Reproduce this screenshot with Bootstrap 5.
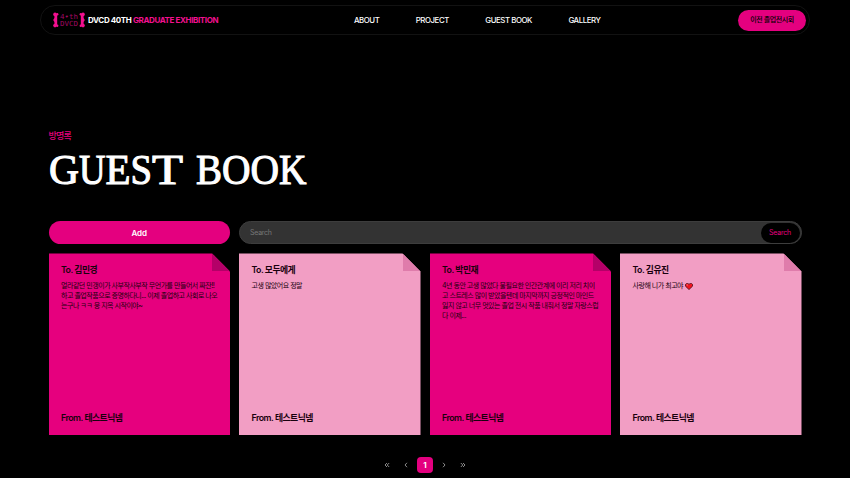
<!DOCTYPE html>
<html lang="ko">
<head>
<meta charset="utf-8">
<meta name="viewport" content="width=device-width, initial-scale=1">
<title>Guest Book</title>
<link href="https://cdn.jsdelivr.net/npm/bootstrap@5.3.0/dist/css/bootstrap.min.css" rel="stylesheet">
<style>
body{background:#000;color:#fff;font-family:Inter,"Noto Sans CJK KR",sans-serif;height:478px;overflow:hidden}
.top-bar{margin:5px 40px 0;width:770px;height:30px;border:1px solid #121212;border-radius:15px;padding:0 3px 0 12px}
.brand-text{font-size:8px;font-weight:700;letter-spacing:-.38px;line-height:12px;margin-left:3px;width:266px;white-space:nowrap}
.pink{color:#f2108f}
.menu{gap:36.4px}
.menu a{font-size:7.8px;font-weight:500;letter-spacing:-.42px;line-height:12px;color:#fff;padding:0;white-space:nowrap}
.prev-btn{width:68px;height:21px;border-radius:11px;background:#e4007f;color:#000;font-size:7px;font-weight:500;letter-spacing:-.45px;padding:0;border:0}
.page-area{width:753px;margin:94px 0 0 48.5px}
.sub{font-size:9px;font-weight:500;line-height:13px;color:#e4007f;letter-spacing:-.8px}
.headline{height:54px;margin:3px 0 0;line-height:0}
.headline text{font-family:"Liberation Serif",serif;font-size:42.5px;font-weight:400;fill:#fff;stroke:#fff;stroke-width:1.1px}
.tools{display:grid;grid-template-columns:181.5px minmax(0,1fr);gap:9px;margin-top:22.4px}
.add-btn{height:23px;border-radius:12px;background:#e4007f;color:#fff;font-size:8px;font-weight:600;line-height:22px;padding:0;border:0}
.search-box{height:23px;border-radius:12px;background:#333;border:1px solid #3d3d3d;padding:0 1px 0 10px}
.search-box input{background:none;border:0;padding:1.5px 0 0;font-size:7px;letter-spacing:-.25px;color:#888}
.search-box input::placeholder{color:#777;opacity:1}
.search-btn{width:39px;height:19.5px;border-radius:10px;background:#000;color:#e4007f;font-size:7px;letter-spacing:-.2px;padding:1px 0 0;border:0;flex:none}
.notes{display:grid;grid-template-columns:repeat(4,minmax(0,1fr));gap:9px;margin-top:9px}
.note{height:181.5px;position:relative;padding:10px 12px 10.5px 12.5px;color:#18000d;clip-path:polygon(0 0,calc(100% - 18px) 0,100% 18px,100% 100%,0 100%)}
.note::after{content:"";position:absolute;right:0;top:0;width:18px;height:18px;background:#b40068}
.hot{background:#e6007e}
.soft{background:#f29ec4}
.soft::after{background:#df7cab}
.note h2{font-size:8.8px;font-weight:600;line-height:13px;letter-spacing:-.5px;margin:0}
.note p{font-size:7px;line-height:10px;letter-spacing:-.49px;margin:5px 0 0;white-space:nowrap}
.pager{gap:3px;margin-top:22px;height:16px}
.pager a{width:16px;height:16px;display:flex;align-items:center;justify-content:center;color:#888}
.pager a.on{background:#e4007f;border-radius:4px;color:#fff;font-size:8px;font-weight:700;text-decoration:none}
</style>
</head>
<body>
<nav class="top-bar d-flex align-items-center">
  <svg width="32" height="16" viewBox="0 0 32 16">
    <g fill="#f2108f"><circle cx="2" cy="2.4" r="1.8"/><circle cx="4.2" cy="2.2" r="1.2"/><circle cx="2" cy="13.6" r="1.8"/><circle cx="4.2" cy="13.8" r="1.2"/><path d="M1.400 2h2.800v12H1.400v-4L.2 8l1.200-2z"/>
    <circle cx="30" cy="2.4" r="1.8"/><circle cx="27.800" cy="2.200" r="1.200"/><circle cx="30" cy="13.600" r="1.800"/><circle cx="27.800" cy="13.800" r="1.200"/><path d="M30.600 2h-2.800v12h2.800v-4l1.200-2-1.200-2z"/></g>
    <g fill="#a10860" font-family="DejaVu Sans Mono,monospace" font-size="7"><text x="7" y="7.200" textLength="18" lengthAdjust="spacingAndGlyphs">4•th</text><text x="7" y="13.700" textLength="18" lengthAdjust="spacingAndGlyphs">DVCD</text></g>
  </svg>
  <span class="brand-text">DVCD 40TH <span class="pink">GRADUATE EXHIBITION</span></span>
  <div class="menu d-flex">
    <a class="nav-link" href="#">ABOUT</a><a class="nav-link" href="#">PROJECT</a><a class="nav-link" href="#">GUEST BOOK</a><a class="nav-link" href="#">GALLERY</a>
  </div>
  <button class="btn prev-btn ms-auto">이전 졸업전시회</button>
</nav>
<main class="page-area">
  <div class="sub">방명록</div>
  <h1 class="headline"><svg width="262" height="54" role="img" aria-label="GUEST BOOK">
    <g transform="translate(.5 38.500)">
    <text x="-.5" textLength="30" lengthAdjust="spacingAndGlyphs">G</text><text x="29.500" textLength="26.500" lengthAdjust="spacingAndGlyphs">U</text><text x="56" textLength="25" lengthAdjust="spacingAndGlyphs">E</text><text x="81" textLength="21.500" lengthAdjust="spacingAndGlyphs">S</text><text x="102.500" textLength="31" lengthAdjust="spacingAndGlyphs">T</text>
    <text x="146.500" textLength="26" lengthAdjust="spacingAndGlyphs">B</text><text x="172.500" textLength="28.500" lengthAdjust="spacingAndGlyphs">O</text><text x="201" textLength="28.500" lengthAdjust="spacingAndGlyphs">O</text><text x="229.500" textLength="27.500" lengthAdjust="spacingAndGlyphs">K</text>
    </g></svg></h1>
  <div class="tools">
    <button class="btn add-btn">Add</button>
    <div class="search-box d-flex align-items-center"><input class="flex-grow-1" placeholder="Search" aria-label="Search"><button class="btn search-btn">Search</button></div>
  </div>
  <section class="notes">
    <article class="note hot d-flex flex-column"><h2>To. 김민경</h2><p>얼라같던 민갱이가 사부작사부작 무언가를 만들어서 짜잔!!<br>하고 졸업작품으로 증명하다니... 이제 졸업하고 사회로 나오<br>는구나 ㅋㅋ 웅 지옥 시작이야~</p><h2 class="mt-auto">From. 테스트닉넴</h2></article>
    <article class="note soft d-flex flex-column"><h2>To. 모두에게</h2><p>고생 많았어요 정말</p><h2 class="mt-auto">From. 테스트닉넴</h2></article>
    <article class="note hot d-flex flex-column"><h2>To. 박민재</h2><p>4년 동안 고생 많았다 불필요한 인간관계에 이리 저리 치이<br>고 스트레스 많이 받았을텐데 마지막까지 긍정적인 마인드<br>잃지 않고 너무 멋있는 졸업 전시 작품 내줘서 정말 자랑스럽<br>다 이제...</p><h2 class="mt-auto">From. 테스트닉넴</h2></article>
    <article class="note soft d-flex flex-column"><h2>To. 김유진</h2><p>사랑해 니가 최고야 <svg width="8" height="7" viewBox="0 0 8 7"><path d="M4 6.600.5 3.200V1.400L1.600.4h1.300L4 1.400 5.100.4h1.300l1.100 1v1.800z" fill="#f0141e" stroke="#35000c" stroke-width=".7"/><path d="M1.700 1.500h1v1h-1z" fill="#ff9a9a"/></svg></p><h2 class="mt-auto">From. 테스트닉넴</h2></article>
  </section>
  <div class="pager d-flex justify-content-center">
    <a href="#" aria-label="First"><svg width="6" height="6" viewBox="0 0 6 6" fill="none" stroke="currentColor"><path d="M3 1 1 3l2 2M5.200 1l-2 2 2 2"/></svg></a>
    <a href="#" aria-label="Previous"><svg width="6" height="6" viewBox="0 0 6 6" fill="none" stroke="currentColor"><path d="M4 .8 2 3l2 2.200"/></svg></a>
    <a href="#" class="on">1</a>
    <a href="#" aria-label="Next"><svg width="6" height="6" viewBox="0 0 6 6" fill="none" stroke="currentColor"><path d="M2 .8 4 3 2 5.200"/></svg></a>
    <a href="#" aria-label="Last"><svg width="6" height="6" viewBox="0 0 6 6" fill="none" stroke="currentColor"><path d="m3 1 2 2-2 2M.8 1l2 2-2 2"/></svg></a>
  </div>
</main>
<script src="https://cdn.jsdelivr.net/npm/bootstrap@5.3.0/dist/js/bootstrap.bundle.min.js"></script>
</body>
</html>
